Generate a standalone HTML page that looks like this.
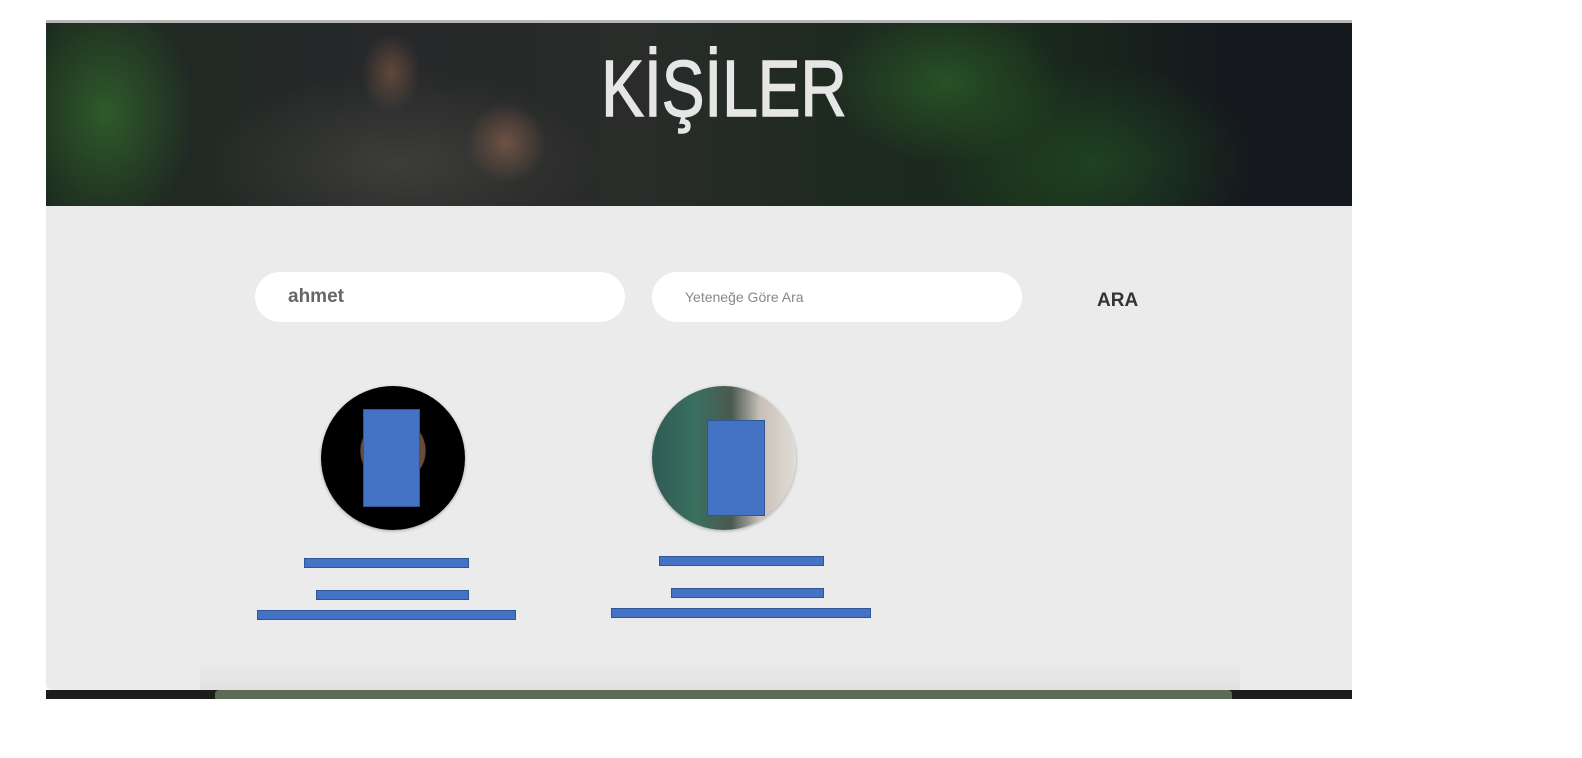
<!DOCTYPE html>
<html><head><meta charset="utf-8"><style>
*{margin:0;padding:0;box-sizing:border-box}
html{overflow:hidden}
body{width:1582px;height:758px;background:#fff;position:relative;overflow:hidden;font-family:"Liberation Sans",sans-serif}
.topline{position:absolute;left:46px;top:20px;width:1306px;height:3px;background:#b8b8b8}
.hdr{position:absolute;left:46px;top:23px;width:1306px;height:183px;overflow:hidden;
background:
radial-gradient(ellipse 90px 120px at 60px 90px,rgba(60,130,50,.55),transparent),
radial-gradient(ellipse 120px 80px at 900px 60px,rgba(50,120,45,.5),transparent),
radial-gradient(ellipse 160px 100px at 1050px 140px,rgba(40,100,40,.45),transparent),
radial-gradient(ellipse 200px 90px at 350px 140px,rgba(90,85,75,.45),transparent),
radial-gradient(ellipse 40px 40px at 460px 120px,rgba(190,120,90,.5),transparent),
radial-gradient(ellipse 30px 40px at 345px 50px,rgba(170,110,80,.45),transparent),
linear-gradient(90deg,#1c2a1e 0%,#26282a 25%,#2a2c2a 45%,#1e2a20 60%,#1a2a1c 75%,#15191d 90%,#15181c 100%)}
.hdr h1{position:absolute;left:25px;width:1306px;top:20px;text-align:center;color:#e6e6e6;font-size:80px;font-weight:400;-webkit-text-stroke:1.5px #e6e6e6;transform:scaleX(.8);transform-origin:653px 0}
.main{position:absolute;left:46px;top:206px;width:1306px;height:484px;background:#ebebeb;border-radius:0 0 0 6px}
.inp{position:absolute;top:272px;height:50px;width:370px;background:#fff;border-radius:25px}
.inp span{position:absolute;top:50%;transform:translateY(-50%)}
.ara{position:absolute;left:1097px;top:290px;font-size:19px;font-weight:bold;color:#333}
.av{position:absolute;width:144px;height:144px;border-radius:50%;top:386px;box-shadow:0 1px 3px rgba(0,0,0,.3)}
.b{position:absolute;background:#4472c4;border:1px solid #2f5597}
.strip{position:absolute;left:46px;top:690px;width:1306px;height:9px;background:#1a1d1a}
.bar{position:absolute;left:215px;top:690px;width:1017px;height:9px;background:#5d6a55;border-radius:4px 4px 0 0}
.shadow{position:absolute;left:200px;top:660px;width:1040px;height:30px;background:linear-gradient(#ebebeb,#e2e2e2)}
</style></head><body>
<div class="topline"></div>
<div class="hdr"><h1>KİŞİLER</h1></div>
<div class="main"></div>
<div class="shadow"></div>
<div class="inp" style="left:255px"><span style="left:33px;font-size:19px;color:#666;font-weight:bold">ahmet</span></div>
<div class="inp" style="left:652px"><span style="left:33px;font-size:14px;color:#888">Yeteneğe Göre Ara</span></div>
<div class="ara">ARA</div>
<div class="av" style="left:321px;background:radial-gradient(circle at 50% 45%,#6a4a3a 0 30%,#000 31%)"></div>
<div class="av" style="left:652px;background:linear-gradient(90deg,#2f5a55 0%,#3a7060 30%,#4a5a50 55%,#c8c0b8 75%,#e0dcd6 100%)"></div>
<div class="b" style="left:363px;top:409px;width:57px;height:98px"></div>
<div class="b" style="left:707px;top:420px;width:58px;height:96px"></div>
<div class="b" style="left:304px;top:558px;width:165px;height:10px"></div>
<div class="b" style="left:316px;top:590px;width:153px;height:10px"></div>
<div class="b" style="left:257px;top:610px;width:259px;height:10px"></div>
<div class="b" style="left:659px;top:556px;width:165px;height:10px"></div>
<div class="b" style="left:671px;top:588px;width:153px;height:10px"></div>
<div class="b" style="left:611px;top:608px;width:260px;height:10px"></div>
<div class="strip"></div>
<div class="bar"></div>
</body></html>
